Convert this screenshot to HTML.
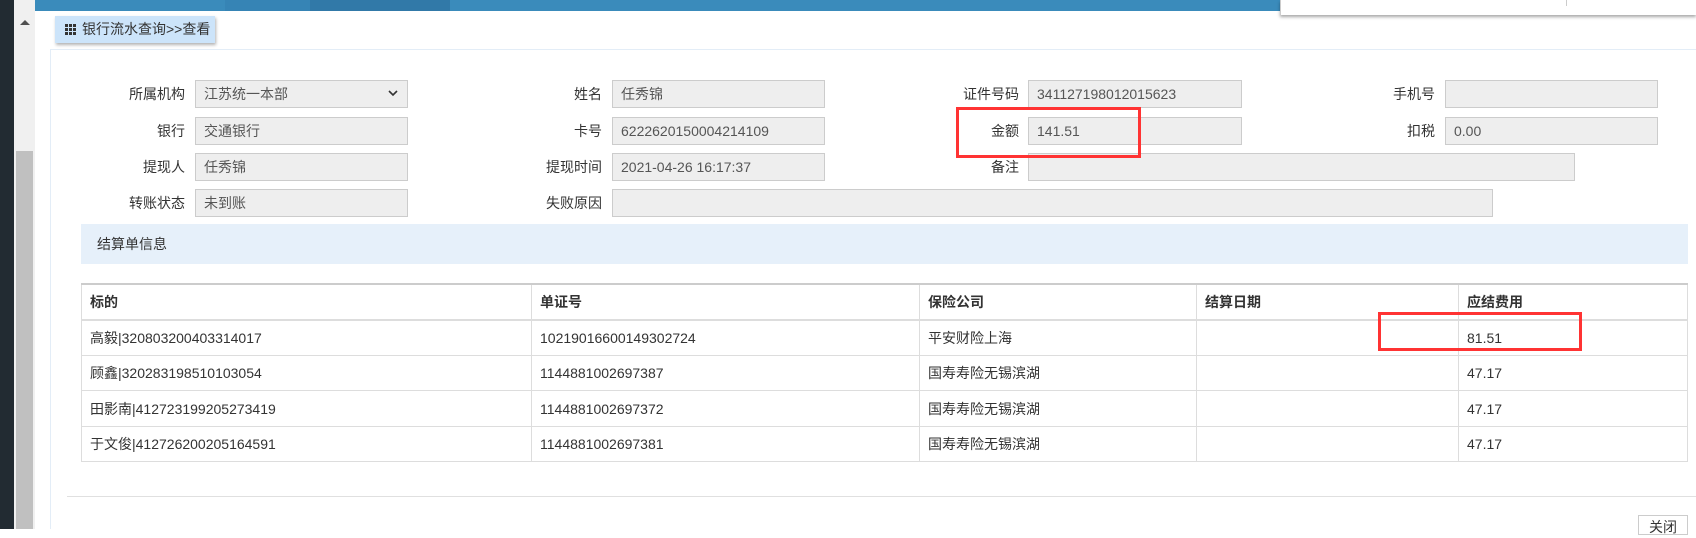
<!DOCTYPE html>
<html><head><meta charset="utf-8"><style>
*{margin:0;padding:0;box-sizing:border-box}
body{width:1696px;height:529px;overflow:hidden;background:#fff;position:relative;font-family:"Liberation Sans","Noto Sans CJK SC",sans-serif;font-size:14px;color:#333}
.a{position:absolute}
.lbl{position:absolute;text-align:right;width:120px;line-height:28px;font-size:14px;color:#333}
.inp{position:absolute;height:28px;background:#eee;border:1px solid #ccc;line-height:26px;padding-left:8px;color:#555;font-size:14px}
table{position:absolute;left:81px;top:283px;width:1607px;border-collapse:collapse;border:1px solid #ddd;border-top:2px solid #ccc}
td,th{border:1px solid #ddd;height:35.6px;padding:0 8px;text-align:left;font-size:14px;color:#333;white-space:nowrap}
th{font-weight:bold;border-bottom:2px solid #ddd}
.red{position:absolute;border:3px solid #f33}
</style></head><body>
<div class="a" style="left:0;top:0;width:14px;height:529px;background:#222b32"></div>
<div class="a" style="left:14px;top:0;width:21px;height:529px;background:#f0f0f0"></div>
<div class="a" style="left:16px;top:151px;width:17px;height:378px;background:#c0c0c0"></div>
<div class="a" style="left:20px;top:20px;width:0;height:0;border-left:5px solid transparent;border-right:5px solid transparent;border-bottom:5px solid #505050"></div>
<div class="a" style="left:35px;top:0;width:1661px;height:11px;background:#3a8bbb"></div>
<div class="a" style="left:225px;top:0;width:85px;height:11px;background:#3684b5"></div>
<div class="a" style="left:310px;top:0;width:140px;height:11px;background:#3179a8"></div>
<div class="a" style="left:1280px;top:0;width:416px;height:15px;background:#fff;box-shadow:0 2px 3px rgba(0,0,0,.35);border-left:1px solid #ccc"></div>
<div class="a" style="left:1566px;top:0;width:1px;height:6px;background:#ccc"></div>
<div class="a" style="left:50px;top:49px;width:1646px;height:480px;border-top:1px solid #e3edf7;border-left:1px solid #e3edf7"></div>
<div class="a" style="left:55px;top:16px;width:160px;height:27px;background:#cce4fa;box-shadow:1px 2px 3px rgba(0,0,0,.3);line-height:27px;padding-left:27px;font-size:14px;color:#333">银行流水查询&gt;&gt;查看</div>
<svg class="a" style="left:65px;top:24px" width="11" height="11"><g fill="#333"><rect x="0" y="0" width="3" height="3"/><rect x="4" y="0" width="3" height="3"/><rect x="8" y="0" width="3" height="3"/><rect x="0" y="4" width="3" height="3"/><rect x="4" y="4" width="3" height="3"/><rect x="8" y="4" width="3" height="3"/><rect x="0" y="8" width="3" height="3"/><rect x="4" y="8" width="3" height="3"/><rect x="8" y="8" width="3" height="3"/></g></svg>

<div class="lbl" style="left:65px;top:80px">所属机构</div>
<div class="inp" style="left:195px;top:80px;width:213px">江苏统一本部</div>
<svg class="a" style="left:388px;top:90px" width="10" height="7"><path d="M1 1 L5 5 L9 1" stroke="#333" stroke-width="1.6" fill="none"/></svg>
<div class="lbl" style="left:65px;top:117px">银行</div>
<div class="inp" style="left:195px;top:117px;width:213px">交通银行</div>
<div class="lbl" style="left:65px;top:153px">提现人</div>
<div class="inp" style="left:195px;top:153px;width:213px">任秀锦</div>
<div class="lbl" style="left:65px;top:189px">转账状态</div>
<div class="inp" style="left:195px;top:189px;width:213px">未到账</div>

<div class="lbl" style="left:482px;top:80px">姓名</div>
<div class="inp" style="left:612px;top:80px;width:213px">任秀锦</div>
<div class="lbl" style="left:482px;top:117px">卡号</div>
<div class="inp" style="left:612px;top:117px;width:213px">6222620150004214109</div>
<div class="lbl" style="left:482px;top:153px">提现时间</div>
<div class="inp" style="left:612px;top:153px;width:213px">2021-04-26 16:17:37</div>
<div class="lbl" style="left:482px;top:189px">失败原因</div>
<div class="inp" style="left:612px;top:189px;width:881px"></div>

<div class="lbl" style="left:899px;top:80px">证件号码</div>
<div class="inp" style="left:1028px;top:80px;width:214px">341127198012015623</div>
<div class="lbl" style="left:899px;top:117px">金额</div>
<div class="inp" style="left:1028px;top:117px;width:214px">141.51</div>
<div class="lbl" style="left:899px;top:153px">备注</div>
<div class="inp" style="left:1028px;top:153px;width:547px"></div>

<div class="lbl" style="left:1315px;top:80px">手机号</div>
<div class="inp" style="left:1445px;top:80px;width:213px"></div>
<div class="lbl" style="left:1315px;top:117px">扣税</div>
<div class="inp" style="left:1445px;top:117px;width:213px">0.00</div>

<div class="a" style="left:81px;top:224px;width:1607px;height:40px;background:#e6f0fa;line-height:40px;padding-left:16px;font-size:14px">结算单信息</div>

<table>
<tr><th style="width:450px">标的</th><th style="width:388px">单证号</th><th style="width:277px">保险公司</th><th style="width:262px">结算日期</th><th>应结费用</th></tr>
<tr><td>高毅|320803200403314017</td><td>1021901660014930272­4</td><td>平安财险上海</td><td></td><td>81.51</td></tr>
<tr><td>顾鑫|320283198510103054</td><td>1144881002697387</td><td>国寿寿险无锡滨湖</td><td></td><td>47.17</td></tr>
<tr><td>田影南|412723199205273419</td><td>1144881002697372</td><td>国寿寿险无锡滨湖</td><td></td><td>47.17</td></tr>
<tr><td>于文俊|412726200205164591</td><td>1144881002697381</td><td>国寿寿险无锡滨湖</td><td></td><td>47.17</td></tr>
</table>

<div class="red" style="left:956px;top:107px;width:185px;height:51px"></div>
<div class="red" style="left:1378px;top:312px;width:204px;height:39px"></div>

<div class="a" style="left:67px;top:496px;width:1629px;height:1px;background:#e0e0e0"></div>
<div class="a" style="left:1638px;top:515px;width:50px;height:20px;border:1px solid #ccc;background:#fff;text-align:center;line-height:22px;font-size:14px">关闭</div>
</body></html>
